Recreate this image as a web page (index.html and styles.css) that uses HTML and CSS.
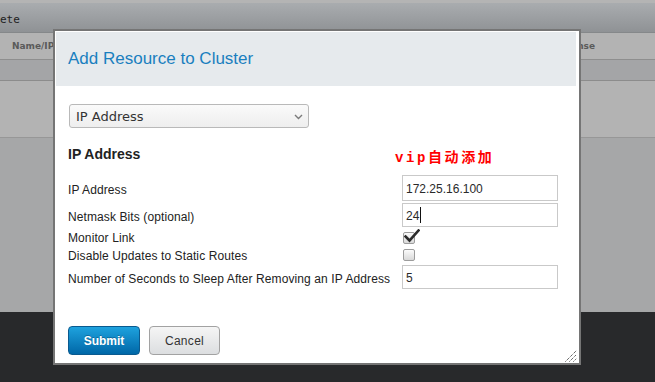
FILE: index.html
```html
<!DOCTYPE html>
<html>
<head>
<meta charset="utf-8">
<link rel="stylesheet" href="styles.css">
</head>
<body>
<div class="page">
  <div class="topstrip"></div>
  <div class="toolbar"><span class="tool-text">ete</span></div>
  <div class="thead">
    <span class="th th-name">Name/IP</span>
    <span class="th th-se">Response</span>
  </div>
  <div class="row-dark"></div>
  <div class="row-light"></div>
  <div class="row-mid"></div>
  <div class="footer-dark"></div>
</div>

<div class="dialog">
  <div class="dlg-header"><span class="dlg-title">Add Resource to Cluster</span></div>
  <div class="dlg-body">
    <div class="select">
      <span>IP Address</span>
      <svg class="chev" width="9" height="6" viewBox="0 0 9 6"><path d="M1 1 L4.5 4.5 L8 1" fill="none" stroke="#7a7a7a" stroke-width="1.4"/></svg>
    </div>
    <div class="heading-row">
      <span class="heading">IP Address</span>
      <span class="note">vip自动添加</span>
    </div>
    <div class="form">
      <span class="label r1">IP Address</span>
      <div class="ctl r1"><div class="field">172.25.16.100</div></div>
      <span class="label r2">Netmask Bits (optional)</span>
      <div class="ctl r2"><div class="field field-b">24<span class="caret"></span></div></div>
      <span class="label r3">Monitor Link</span>
      <div class="ctl r3">
        <span class="cb">
          <svg class="tick" width="16" height="14" viewBox="0 0 16 14"><path d="M1.5 7.5 L5.5 11.5 L14.5 1.5" fill="none" stroke="#2b2b2b" stroke-width="2.6" stroke-linecap="square"/></svg>
        </span>
      </div>
      <span class="label r4">Disable Updates to Static Routes</span>
      <div class="ctl r4"><span class="cb"></span></div>
      <span class="label r5">Number of Seconds to Sleep After Removing an IP Address</span>
      <div class="ctl r5"><div class="field field-b">5</div></div>
    </div>
    <div class="buttons">
      <button class="btn btn-submit">Submit</button>
      <button class="btn btn-cancel">Cancel</button>
    </div>
  </div>
  <svg class="grip" width="12" height="12" viewBox="0 0 12 12">
    <path d="M0.5 11.5 L11.5 0.5 M4.5 11.5 L11.5 4.5 M8.5 11.5 L11.5 8.5" stroke="#222" stroke-width="1" stroke-dasharray="1 1" fill="none"/>
  </svg>
</div>
</body>
</html>
```

FILE: styles.css
```css
* { box-sizing: border-box; }
html, body { margin: 0; padding: 0; }
body {
  width: 655px;
  height: 382px;
  overflow: hidden;
  font-family: "Liberation Sans", Arial, sans-serif;
  background: #28292b;
  position: relative;
}

.page { display: flex; flex-direction: column; height: 382px; }
.topstrip { height: 3px; background: #b4b4b4; }
.toolbar {
  height: 30px;
  background: linear-gradient(#a9acaf, #8f9295);
  border-bottom: 1px solid #85888a;
  display: flex;
  align-items: center;
  overflow: hidden;
}
.tool-text {
  font-family: "DejaVu Sans Mono", monospace;
  font-size: 11px;
  color: #1e1e1e;
  margin-left: 0;
  padding-top: 4px;
}
.thead {
  height: 27px;
  background: #b3b3b3;
  border-bottom: 1px solid #8e8e8e;
  display: flex;
  align-items: center;
  overflow: hidden;
}
.th {
  font-family: "DejaVu Sans", sans-serif;
  font-weight: bold;
  font-size: 9px;
  color: #5a5a5a;
}
.th-name { margin-left: 12px; }
.th-se { margin-left: auto; margin-right: 60px; }
.row-dark { height: 21px; background: #a4a5a7; border-bottom: 1px solid #8c8c8c; }
.row-light { height: 57px; background: #b3b3b3; border-bottom: 1px solid #979797; }
.row-mid { height: 174px; background: #a6a7a8; }
.footer-dark { flex: 1; background: #28292b; }

.dialog {
  position: absolute;
  left: 53px;
  top: 29px;
  width: 528px;
  height: 336px;
  background: #fff;
  border: 2px solid #757575;
  padding: 1px 3px 1px 1px;
}
.dlg-header {
  height: 54px;
  background: #e6eaed;
  display: flex;
  align-items: center;
  padding-left: 12px;
}
.dlg-title {
  font-size: 17px;
  color: #1a7fbf;
  padding-top: 0;
}
.dlg-body { padding: 18px 0 0 12px; }

.select {
  margin-left: 1px;
  width: 240px;
  height: 24px;
  border: 1px solid #b9b9b9;
  border-radius: 3px;
  background: linear-gradient(#fafafa, #eeeeee);
  display: flex;
  align-items: center;
  justify-content: space-between;
  padding: 1px 5px 0 6px;
  font-family: "DejaVu Sans", sans-serif;
  font-size: 13px;
  color: #333;
}
.chev { margin-top: 0; }

.heading-row {
  margin-top: 14px;
  height: 16px;
  display: grid;
  grid-template-columns: 327px auto;
  align-items: center;
}
.heading {
  font-size: 14px;
  font-weight: bold;
  color: #222;
  line-height: 16px;
}
.note {
  font-family: "Liberation Mono", "Noto Sans CJK SC", monospace;
  font-weight: bold;
  font-size: 14px;
  letter-spacing: 2.6px;
  color: #f00;
  line-height: 16px;
  padding-top: 8px;
}

.form {
  margin-top: 16px;
  display: grid;
  grid-template-columns: 334px 156px;
  grid-template-rows: 28px 26px 17px 19px 26px;
  align-items: center;
}
.label {
  font-size: 12px;
  color: #222;
  line-height: 14px;
  padding-top: 3px;
  letter-spacing: 0.1px;
}
.ctl { display: flex; align-items: center; }
.field {
  width: 156px;
  height: 26px;
  border: 1px solid #c9c9c9;
  background: #fff;
  display: flex;
  align-items: center;
  padding: 2px 0 0 3px;
  font-size: 12px;
  color: #2a2a2a;
}
.field-b { height: 24px; }
.caret {
  display: inline-block;
  width: 1px;
  height: 16px;
  background: #111;
  margin-left: 1px;
  margin-top: -2px;
}
.cb {
  position: relative;
  display: inline-block;
  width: 12px;
  height: 12px;
  margin-left: 1px;
  border: 1px solid #9c9c9c;
  border-radius: 2px;
  background: linear-gradient(#fbfbfb, #d9d9d9);
}
.r3 .cb { margin-top: 3px; }
.tick { position: absolute; left: 0px; top: -4px; }

.buttons {
  margin-top: 36px;
  display: flex;
  gap: 9px;
}
.btn {
  height: 29px;
  border-radius: 4px;
  font-family: "Liberation Sans", Arial, sans-serif;
  font-size: 12px;
  padding: 0;
  margin: 0;
}
.btn-submit {
  width: 72px;
  background: linear-gradient(#1ea2de, #0067a7);
  border: 1px solid #0a5a8f;
  color: #fff;
  font-weight: bold;
  text-shadow: 0 -1px 0 rgba(0,0,0,0.25);
}
.btn-cancel {
  width: 71px;
  background: linear-gradient(#f5f5f5, #dcdee0);
  border: 1px solid #a2a2a2;
  color: #333;
  letter-spacing: 0.3px;
}
.grip { position: absolute; right: 2px; bottom: 1px; }
```
